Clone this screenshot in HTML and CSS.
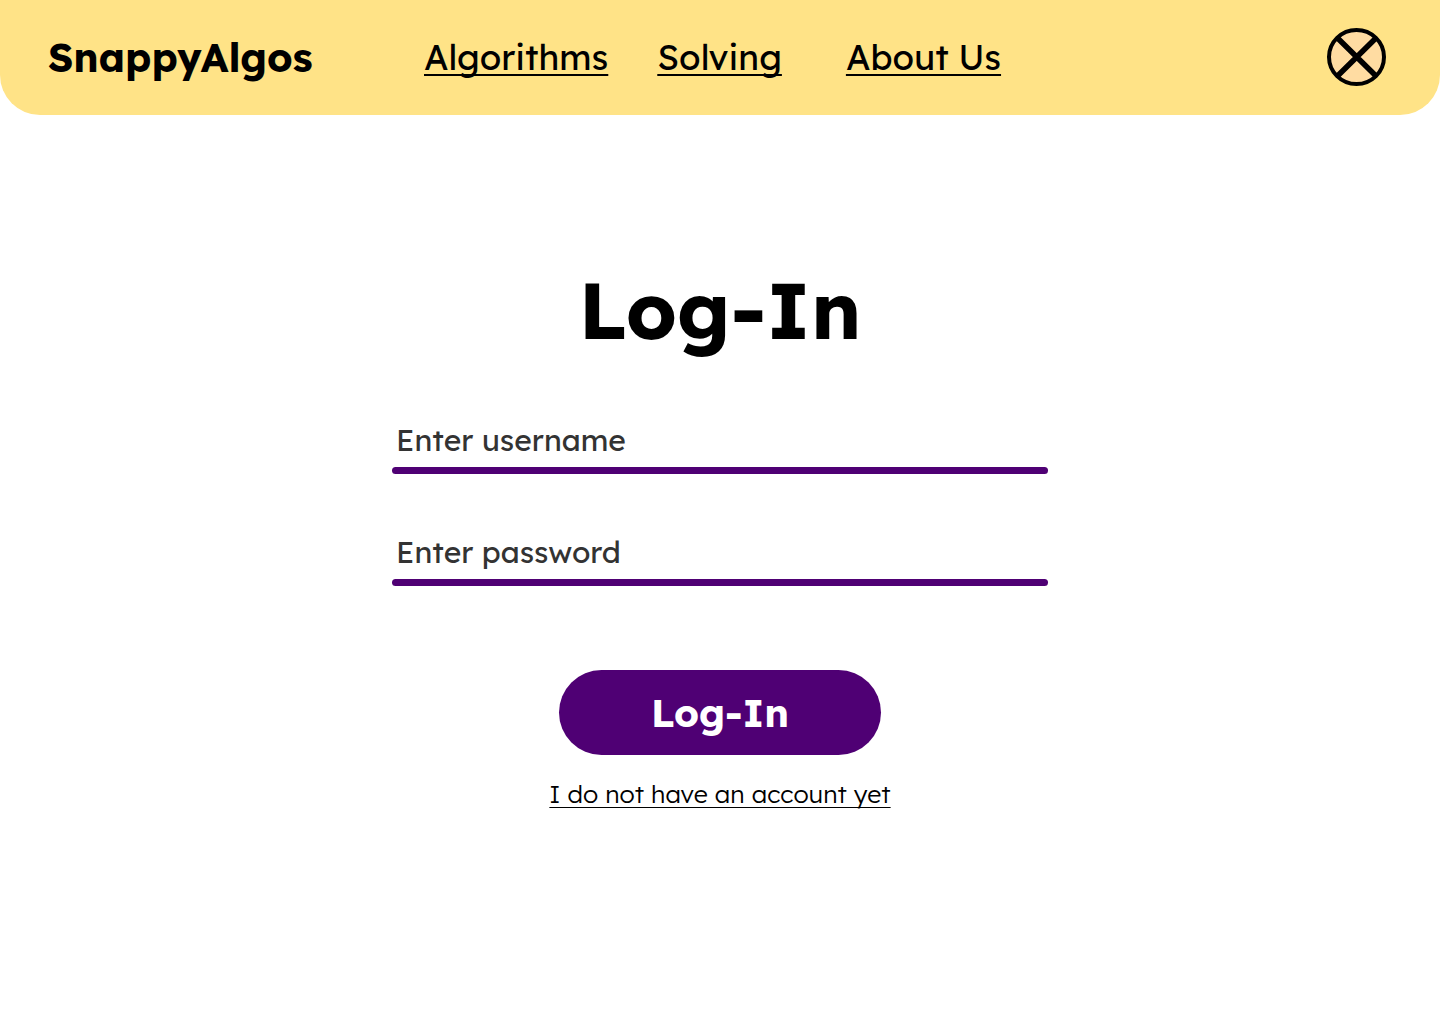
FILE: index.html
```html
<!DOCTYPE html>
<html lang="en">
<head>
<meta charset="utf-8">
<meta name="viewport" content="width=device-width, initial-scale=1">
<title>SnappyAlgos – Log-In</title>
<link rel="stylesheet" href="styles.css">
</head>
<body>
<header class="site-header">
  <a class="brand" href="#">SnappyAlgos</a>
  <nav class="site-nav">
    <a class="nav-link nav-link-first" href="#">Algorithms</a>
    <a class="nav-link" href="#">Solving</a>
    <a class="nav-link nav-link-last" href="#">About Us</a>
  </nav>
  <button class="close-button" type="button" aria-label="Close">
    <svg class="close-icon" viewBox="0 0 60 60" aria-hidden="true">
      <ellipse cx="30.5" cy="30" rx="27.5" ry="27" fill="#ffdca2" stroke="#000" stroke-width="4"/>
      <path d="M11.5 11L50 49M50 11L11.5 49" stroke="#000" stroke-width="5.5" fill="none"/>
    </svg>
  </button>
</header>
<main class="login">
  <h1 class="title">Log-In</h1>
  <form class="login-form">
    <div class="field">
      <input class="field-input" type="text" placeholder="Enter username" aria-label="Enter username">
    </div>
    <div class="field">
      <input class="field-input" type="password" placeholder="Enter password" aria-label="Enter password">
    </div>
    <button class="submit" type="submit">Log-In</button>
  </form>
  <a class="signup" href="#">I do not have an account yet</a>
</main>
</body>
</html>
```

FILE: styles.css
```css
* {
  box-sizing: border-box;
}

body {
  margin: 0;
  background: #fff;
  color: #000;
  font-family: Lexend, "Open Sans", sans-serif;
}

.site-header {
  display: flex;
  align-items: center;
  padding: 27px 54px 28px 48px;
  background: #ffe387;
  border-radius: 0 0 40px 40px;
}

.brand {
  width: 376px;
  color: inherit;
  font-size: 40px;
  font-weight: 700;
  line-height: 60px;
  text-decoration: none;
}

.site-nav {
  display: flex;
  flex: 1;
}

.nav-link {
  color: inherit;
  font-size: 35px;
  line-height: 60px;
  text-decoration-thickness: 2px;
  text-decoration-skip-ink: none;
  text-underline-offset: 4px;
}

.nav-link-first {
  margin-right: 49px;
}

.nav-link-last {
  margin-left: 64px;
}

.close-button {
  width: 60px;
  height: 60px;
  padding: 0;
  border: 0;
  background: none;
}

.close-icon {
  display: block;
}

.login {
  display: flex;
  flex-direction: column;
  align-items: center;
  padding: 142px 24px 48px;
}

.title {
  margin: 0;
  font-size: 80px;
  line-height: 104px;
}

.login-form {
  display: flex;
  flex-direction: column;
  align-items: center;
  gap: 48px;
  width: 100%;
  max-width: 656px;
  margin-top: 49px;
}

.field {
  width: 100%;
}

.field::after {
  content: "";
  display: block;
  height: 7px;
  border-radius: 4px;
  background: #4f0074;
}

.field-input {
  display: block;
  width: 100%;
  height: 57px;
  padding: 2px 4px 0;
  border: 0;
  background: none;
  color: #333;
  font: inherit;
  font-size: 30px;
}

.field-input::placeholder {
  color: #333;
  opacity: 1;
}

.submit {
  width: 322px;
  height: 85px;
  margin-top: 36px;
  border: 0;
  border-radius: 43px;
  background: #4f0074;
  color: #fff;
  font: inherit;
  font-size: 39px;
  font-weight: 700;
}

.signup {
  margin-top: 19px;
  color: inherit;
  font-size: 25px;
  font-weight: 300;
  line-height: 40px;
  text-decoration-thickness: 1px;
  text-decoration-skip-ink: none;
  text-underline-offset: 4px;
}
```
